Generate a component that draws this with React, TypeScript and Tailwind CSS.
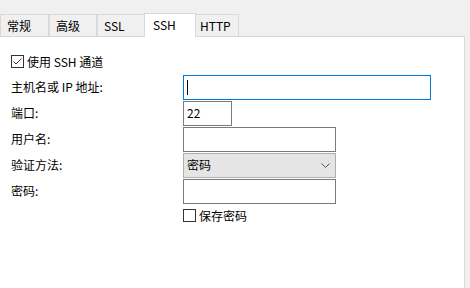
import React from 'react';

const font = { fontFamily: '"Noto Sans CJK SC", "Noto Sans", sans-serif' };

const Tab = ({ label, width, active = false, pad }: { label: string; width: string; active?: boolean; pad: string }) => (
  <div
    className={`flex items-center border-[#d9d9d9] border-t border-l border-r ${width} ${pad} ${
      active ? 'h-[24px] bg-white relative z-10 -mb-px -mx-[1px] pb-[2px]' : 'h-[22px] bg-[#f0f0f0]'
    }`}
  >
    {label}
  </div>
);

const Checkbox = ({ checked }: { checked?: boolean }) => (
  <div className="w-[13px] h-[13px] border border-[#333333] bg-white flex items-center justify-center shrink-0">
    {checked && (
      <svg width="11" height="11" viewBox="0 0 11 11">
        <path d="M1.5 5.5 L4 8 L9.5 2.5" fill="none" stroke="#333" strokeWidth="1" />
      </svg>
    )}
  </div>
);

const Field = ({ label, children }: { label: string; children: React.ReactNode }) => (
  <div className="flex items-center h-[26px]">
    <div className="w-[172px] shrink-0">{label}</div>
    {children}
  </div>
);

export default function App() {
  return (
    <div className="w-[470px] h-[288px] bg-[#f0f0f0] flex flex-col text-[12px] text-black" style={font}>
      <div className="flex items-end h-[36px] pl-0">
        <Tab label="常规" width="w-[49px]" pad="pl-[6px]" />
        <Tab label="高级" width="w-[48px]" pad="pl-[6px]" />
        <Tab label="SSL" width="w-[48px]" pad="pl-[6px]" />
        <Tab label="SSH" width="w-[52px]" pad="pl-[8px]" active />
        <Tab label="HTTP" width="w-[44px]" pad="pl-[4px]" />
      </div>
      <div className="flex-1 bg-white border-t border-r border-[#d9d9d9] mr-[5px] pl-[11px] pt-[18px]">
        <label className="flex items-center gap-[3px] h-[13px]">
          <Checkbox checked />
          <span>使用 SSH 通道</span>
        </label>
        <div className="mt-[6px] flex flex-col">
          <Field label="主机名或 IP 地址:">
            <div className="w-[248px] h-[25px] border border-[#0078d7] flex items-center pl-[3px]">
              <div className="w-px h-[15px] bg-black" />
            </div>
          </Field>
          <Field label="端口:">
            <div className="w-[49px] h-[25px] border border-[#7a7a7a] flex items-center pl-[3px]">22</div>
          </Field>
          <Field label="用户名:">
            <div className="w-[153px] h-[25px] border border-[#7a7a7a]" />
          </Field>
          <Field label="验证方法:">
            <div className="w-[153px] h-[25px] border border-[#adadad] bg-[#e5e5e5] flex items-center justify-between pl-[3px] pr-[5px]">
              <span>密码</span>
              <svg width="9" height="5" viewBox="0 0 9 5">
                <path d="M0.5 0.5 L4.5 4.5 L8.5 0.5" fill="none" stroke="#555" strokeWidth="1" />
              </svg>
            </div>
          </Field>
          <Field label="密码:">
            <div className="w-[153px] h-[25px] border border-[#7a7a7a]" />
          </Field>
        </div>
        <label className="flex items-center gap-[3px] mt-[5px] ml-[172px] h-[13px]">
          <Checkbox />
          <span>保存密码</span>
        </label>
      </div>
    </div>
  );
}
